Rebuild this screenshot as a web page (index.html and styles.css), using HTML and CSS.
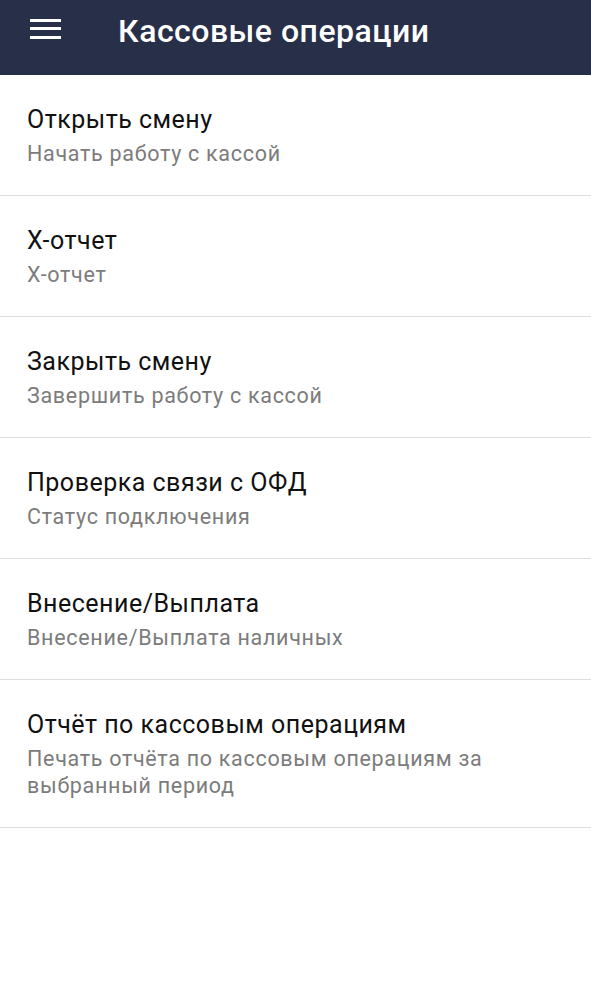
FILE: index.html
```html
<!DOCTYPE html>
<html lang="ru">
<head>
<meta charset="utf-8">
<link rel="stylesheet" href="styles.css">
</head>
<body>
<header class="appbar">
  <span class="menu" aria-label="Меню"><i></i><i></i><i></i></span>
  <h1 class="title">Кассовые операции</h1>
</header>
<ul class="list">
  <li class="item"><div class="item-title">Открыть смену</div><div class="item-sub">Начать работу с кассой</div></li>
  <li class="item"><div class="item-title">X-отчет</div><div class="item-sub">X-отчет</div></li>
  <li class="item"><div class="item-title">Закрыть смену</div><div class="item-sub">Завершить работу с кассой</div></li>
  <li class="item"><div class="item-title">Проверка связи с ОФД</div><div class="item-sub">Статус подключения</div></li>
  <li class="item"><div class="item-title">Внесение/Выплата</div><div class="item-sub">Внесение/Выплата наличных</div></li>
  <li class="item"><div class="item-title">Отчёт по кассовым операциям</div><div class="item-sub">Печать отчёта по кассовым операциям за выбранный период</div></li>
</ul>
</body>
</html>
```
FILE: styles.css
```css
html, body {
  margin: 0;
  padding: 0;
  background: #ffffff;
  font-family: Roboto, "Noto Sans", sans-serif;
}
.appbar {
  height: 75px;
  background: #283049;
  display: flex;
  align-items: center;
  padding-left: 30px;
  box-sizing: border-box;
}
.menu {
  width: 31px;
  display: flex;
  flex-direction: column;
  gap: 5.5px;
  margin-top: -18px;
}
.menu i {
  display: block;
  height: 3px;
  background: #ffffff;
}
.title {
  margin: -14px 0 0 57px;
  color: #ffffff;
  font-size: 32px;
  font-weight: 500;
  letter-spacing: 0.5px;
  line-height: 1;
}
.list {
  list-style: none;
  margin: 0;
  padding: 0;
}
.item {
  border-bottom: 1px solid #dedede;
  padding: 29px 27px 28px 27px;
}
.item-title {
  font-size: 25px;
  line-height: 32px;
  letter-spacing: 0.5px;
  color: #111111;
}
.item-sub {
  font-size: 21.5px;
  line-height: 27px;
  letter-spacing: 0.7px;
  color: #7c7c7c;
  margin-top: 4px;
  padding-right: 40px;
}
```
